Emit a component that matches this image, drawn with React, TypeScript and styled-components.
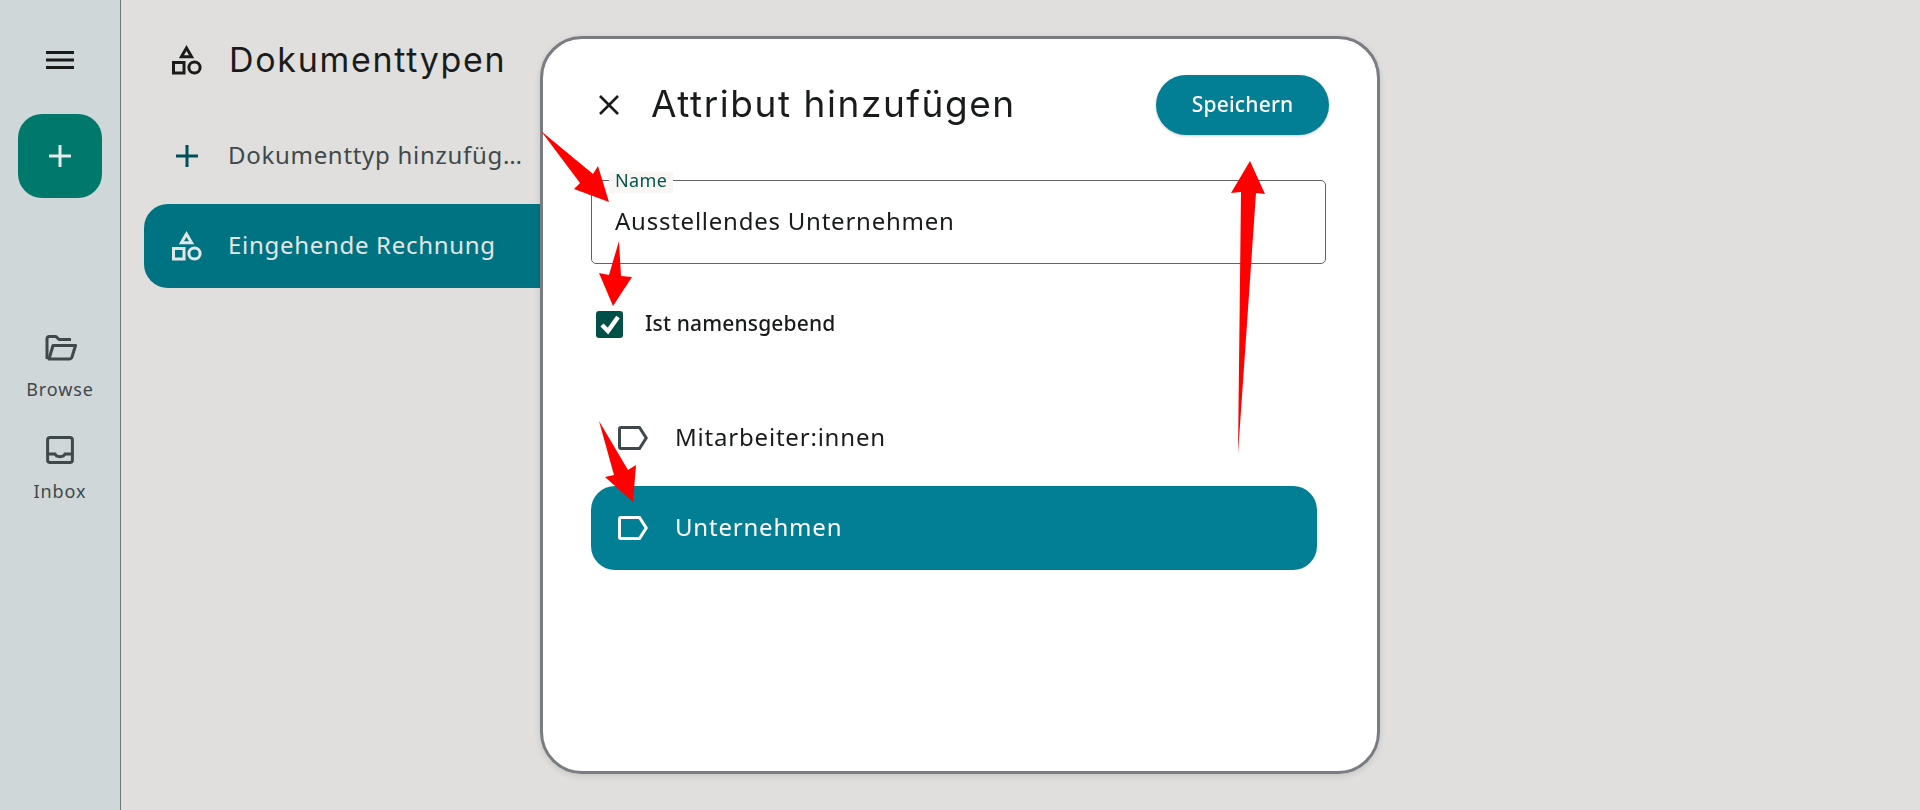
import React from 'react';
import styled, { createGlobalStyle } from 'styled-components';

const GlobalStyle = createGlobalStyle`
    * {
        box-sizing: border-box;
    }

    html,
    body {
        margin: 0;
        height: 100%;
        overflow: hidden;
        background: #e0dfdd;
        font-family: 'Noto Sans', sans-serif;
    }
`;

const ShapesIcon = () => (
    <svg width="30" height="30" viewBox="0 0 30 30" fill="none" stroke="currentColor" strokeWidth="3">
        <path d="M14.5 3 L19.6 11.8 H9.4 Z" />
        <rect x="1.5" y="17.5" width="10.5" height="10.5" />
        <circle cx="22.5" cy="22.5" r="5.6" />
    </svg>
);

const PlusIcon = () => (
    <svg width="22" height="22" viewBox="0 0 22 22" fill="none" stroke="currentColor" strokeWidth="3">
        <path d="M11 0 V22 M0 11 H22" />
    </svg>
);

const TagIcon = () => (
    <svg width="30" height="24" viewBox="0 0 30 24" fill="none" stroke="currentColor" strokeWidth="3">
        <path d="M1.5 3 Q1.5 1.5 3 1.5 H21.5 L28.2 12 L21.5 22.5 H3 Q1.5 22.5 1.5 21 Z" />
    </svg>
);

const Row = ({ selected, label }: { selected?: boolean; label: string }) => (
    <AttributeRow $selected={selected}>
        <TagIcon />
        <span>{label}</span>
    </AttributeRow>
);

const App = () => {
    return (
        <Page>
            <GlobalStyle />
            <Rail>
                <MenuButton>
                    <svg width="28" height="18" viewBox="0 0 28 18" fill="none" stroke="#1a1c1c" strokeWidth="2.8">
                        <path d="M0 1.5 H28 M0 9 H28 M0 16.5 H28" />
                    </svg>
                </MenuButton>
                <Fab>
                    <PlusIcon />
                </Fab>
                <RailNav>
                    <RailLink>
                        <RailIcon>
                            <svg width="34" height="26" viewBox="0 0 34 26" fill="none" stroke="currentColor" strokeWidth="3" strokeLinejoin="round">
                                <path d="M4 24 V4 Q4 1.5 6.5 1.5 H13 L16 4.5 H28" />
                                <path d="M32.5 10.5 H10 L6 24 H26 Q28.5 24 29 22 Z" />
                            </svg>
                        </RailIcon>
                        <RailLabel>Browse</RailLabel>
                    </RailLink>
                    <RailLink>
                        <RailIcon>
                            <svg width="28" height="28" viewBox="0 0 28 28" fill="none" stroke="currentColor" strokeWidth="3">
                                <rect x="1.6" y="1.6" width="24.8" height="24.8" rx="2.5" />
                                <path d="M2 18 H9 C10.5 21.5 17.5 21.5 19 18 H26" />
                            </svg>
                        </RailIcon>
                        <RailLabel>Inbox</RailLabel>
                    </RailLink>
                </RailNav>
            </Rail>

            <TypesPanel>
                <PanelHeader>
                    <IconSlot>
                        <ShapesIcon />
                    </IconSlot>
                    <PanelTitle>Dokumenttypen</PanelTitle>
                </PanelHeader>
                <TypeList>
                    <TypeItem>
                        <IconSlot $color="#004f56">
                            <PlusIcon />
                        </IconSlot>
                        <TypeName>Dokumenttyp hinzufügen</TypeName>
                    </TypeItem>
                    <TypeItem $active>
                        <IconSlot>
                            <ShapesIcon />
                        </IconSlot>
                        <TypeName>Eingehende Rechnung</TypeName>
                    </TypeItem>
                </TypeList>
            </TypesPanel>

            <Backdrop>
                <Dialog>
                    <DialogHeader>
                        <CloseButton>
                            <svg width="22" height="22" viewBox="0 0 22 22" fill="none" stroke="#1a1c1c" strokeWidth="2.6">
                                <path d="M2 2 L20 20 M20 2 L2 20" />
                            </svg>
                        </CloseButton>
                        <DialogTitle>Attribut hinzufügen</DialogTitle>
                        <SaveButton>Speichern</SaveButton>
                    </DialogHeader>

                    <Field>
                        <FieldLabel>Name</FieldLabel>
                        <FieldInput readOnly value="Ausstellendes Unternehmen" />
                    </Field>

                    <CheckRow>
                        <CheckBox>
                            <svg width="27" height="27" viewBox="0 0 27 27" fill="none" stroke="#ffffff" strokeWidth="4.4">
                                <path d="M6 14 L12 20 L22 6" />
                            </svg>
                        </CheckBox>
                        <CheckLabel>Ist namensgebend</CheckLabel>
                    </CheckRow>

                    <AttributeList>
                        <Row label="Mitarbeiter:innen" />
                        <Row label="Unternehmen" selected />
                    </AttributeList>
                </Dialog>
            </Backdrop>

            <Arrows viewBox="0 0 1920 810" width="1920" height="810" fill="#ff0000">
                <polygon points="541,131 593,174 598,166 609,202 574,189 580,183" />
                <polygon points="619,241 621,276 632,277 613,306 599,273 609,275" />
                <polygon points="1238,454 1241,192 1231,193 1250,161 1265,194 1256,193" />
                <polygon points="599,421 628,470 636,465 633,502 605,477 614,475" />
            </Arrows>
        </Page>
    );
};

const Page = styled.div`
    display: flex;
    width: 100%;
    height: 810px;
    background: #e0dfdd;
`;

const Rail = styled.nav`
    display: flex;
    flex-direction: column;
    align-items: center;
    flex: 0 0 121px;
    padding: 46px 0 0;
    background: #d0d7d8;
    border-right: 1px solid #6f7679;
`;

const MenuButton = styled.div`
    display: flex;
    align-items: center;
    justify-content: center;
    height: 28px;
    margin-bottom: 40px;
`;

const Fab = styled.div`
    display: flex;
    align-items: center;
    justify-content: center;
    width: 84px;
    height: 84px;
    border-radius: 24px;
    background: #00796c;
    color: #e6ebe9;
`;

const RailNav = styled.div`
    display: flex;
    flex-direction: column;
    gap: 34px;
    margin-top: 134px;
`;

const RailLink = styled.div`
    display: flex;
    flex-direction: column;
    align-items: center;
    gap: 14px;
    color: #3f484a;
`;

const RailIcon = styled.div`
    display: flex;
    align-items: center;
    justify-content: center;
    height: 32px;
`;

const RailLabel = styled.span`
    font-size: 18px;
    line-height: 22px;
    letter-spacing: 0.9px;
`;

const TypesPanel = styled.section`
    flex: 0 0 500px;
    padding: 0 24px 0 23px;
`;

const PanelHeader = styled.header`
    display: flex;
    align-items: center;
    gap: 27px;
    height: 114px;
    padding: 6px 0 0 28px;
    color: #1a1c1c;
`;

const IconSlot = styled.div<{ $color?: string }>`
    display: flex;
    align-items: center;
    justify-content: center;
    flex: 0 0 30px;
    color: ${(props) => props.$color || 'inherit'};
`;

const PanelTitle = styled.h1`
    margin: 0;
    padding-bottom: 2px;
    font-family: 'Inter', sans-serif;
    font-size: 34px;
    font-weight: 400;
    letter-spacing: 1.7px;
`;

const TypeList = styled.div`
    display: flex;
    flex-direction: column;
    gap: 6px;
`;

const TypeItem = styled.div<{ $active?: boolean }>`
    display: flex;
    align-items: center;
    gap: 26px;
    height: 84px;
    padding: 0 28px;
    border-radius: 24px;
    background: ${(props) => (props.$active ? '#007383' : 'transparent')};
    color: ${(props) => (props.$active ? '#e2e6e6' : '#3f484a')};
`;

const TypeName = styled.span`
    display: block;
    flex: 0 0 297px;
    width: 297px;
    overflow: hidden;
    padding-bottom: 3px;
    font-size: 24px;
    letter-spacing: 0.7px;
    white-space: nowrap;
    text-overflow: ellipsis;
`;

const Backdrop = styled.div`
    position: fixed;
    inset: 0;
    z-index: 1;
    display: flex;
    align-items: center;
    justify-content: center;
`;

const Dialog = styled.div`
    width: 840px;
    height: 738px;
    padding: 36px 48px;
    border: 3px solid #797c80;
    border-radius: 42px;
    background: #ffffff;
    box-shadow: 0 2px 6px rgba(0, 0, 0, 0.12);
`;

const DialogHeader = styled.header`
    display: flex;
    align-items: center;
    height: 60px;
`;

const CloseButton = styled.div`
    display: flex;
    align-items: center;
    justify-content: center;
    flex: 0 0 22px;
    margin: 0 31px 0 7px;
`;

const DialogTitle = styled.h2`
    flex: 1;
    margin: 0;
    padding-bottom: 3px;
    color: #1a1c1c;
    font-family: 'Inter', sans-serif;
    font-size: 37px;
    font-weight: 400;
    letter-spacing: 1.55px;
`;

const SaveButton = styled.button`
    width: 173px;
    height: 60px;
    padding: 0 0 3px;
    border: none;
    border-radius: 30px;
    background: #027f95;
    color: #ffffff;
    font-family: 'Noto Sans', sans-serif;
    font-size: 21px;
    font-weight: 500;
    letter-spacing: 0.2px;
    box-shadow: 0 1px 3px rgba(0, 0, 0, 0.2);
`;

const Field = styled.div`
    position: relative;
    width: 735px;
    height: 84px;
    margin-top: 45px;
    border: 1px solid #5f6368;
    border-radius: 5px;
`;

const FieldLabel = styled.label`
    position: absolute;
    top: -9px;
    left: 17px;
    padding: 0 6px 4px;
    background: #faf6f4;
    color: #00564f;
    font-size: 18px;
    line-height: 17px;
    letter-spacing: 0.4px;
`;

const FieldInput = styled.input`
    display: block;
    width: 100%;
    height: 100%;
    padding: 0 23px 3px;
    border: none;
    outline: none;
    background: transparent;
    color: #1a1c1c;
    font-family: 'Noto Sans', sans-serif;
    font-size: 24px;
    letter-spacing: 0.76px;
`;

const CheckRow = styled.div`
    display: flex;
    align-items: center;
    gap: 22px;
    height: 48px;
    margin-top: 36px;
    padding-left: 5px;
`;

const CheckBox = styled.div`
    width: 27px;
    height: 27px;
    border-radius: 3px;
    background: #00504a;

    svg {
        display: block;
    }
`;

const CheckLabel = styled.span`
    padding-bottom: 2px;
    color: #1a1c1c;
    font-size: 21px;
    font-weight: 500;
    letter-spacing: 0.15px;
`;

const AttributeList = styled.div`
    display: flex;
    flex-direction: column;
    gap: 6px;
    width: 726px;
    margin-top: 48px;
`;

const AttributeRow = styled.div<{ $selected?: boolean }>`
    display: flex;
    align-items: center;
    gap: 27px;
    height: 84px;
    padding-left: 27px;
    border-radius: 24px;
    background: ${(props) => (props.$selected ? '#027f95' : 'transparent')};
    color: ${(props) => (props.$selected ? '#ffffff' : '#1a1c1c')};
    font-size: 24px;
    letter-spacing: 0.8px;

    span {
        padding-bottom: 3px;
    }

    svg {
        color: ${(props) => (props.$selected ? '#ffffff' : '#3f484a')};
    }
`;

const Arrows = styled.svg`
    position: fixed;
    top: 0;
    left: 0;
    z-index: 2;
    pointer-events: none;
`;

export default App;
